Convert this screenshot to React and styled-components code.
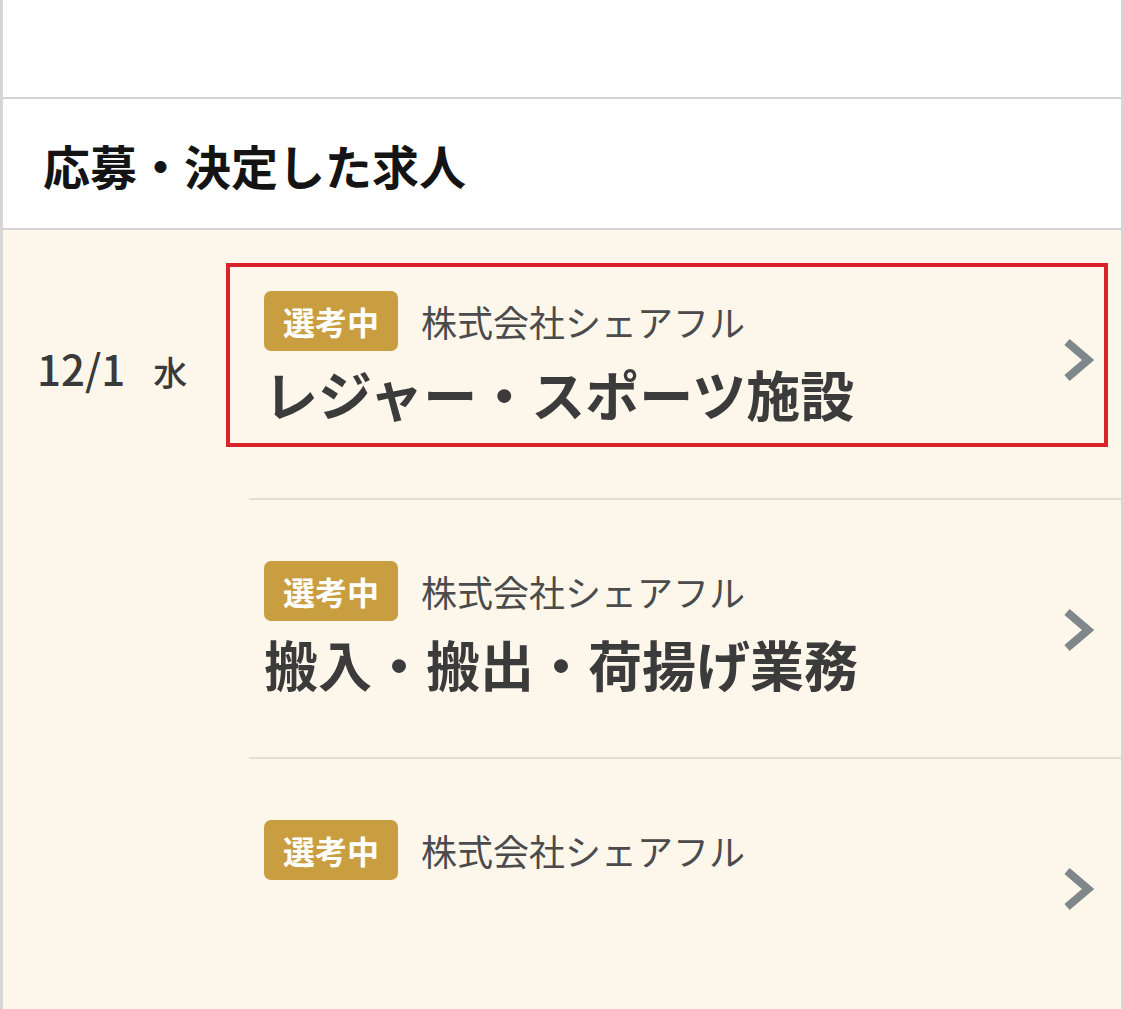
import React from "react";
import styled, { createGlobalStyle } from "styled-components";

const Global = createGlobalStyle`
  html, body { margin: 0; padding: 0; background: #ffffff; }
  body {
    font-family: "Noto Sans CJK JP", "Noto Sans", sans-serif;
    -webkit-font-smoothing: antialiased;
  }
  * { box-sizing: border-box; }
`;

const Page = styled.div`
  width: 1124px;
  min-height: 100vh;
  display: flex;
  flex-direction: column;
  background: #ffffff;
  border-left: 3px solid #d6d6d6;
  border-right: 3px solid #d6d6d6;
`;

const TopArea = styled.div`
  height: 99px;
  border-bottom: 2px solid #d4d4d4;
`;

const Header = styled.div`
  height: 131px;
  display: flex;
  align-items: center;
  padding-left: 40px;
  border-bottom: 2px solid #d4d4d4;
`;

const Heading = styled.h2`
  margin: 0;
  font-size: 47px;
  font-weight: 700;
  line-height: 1;
  color: #141414;
  padding-top: 2px;
`;

const List = styled.div`
  flex: 1;
  background: #fdf7eb;
`;

const Row = styled.div`
  position: relative;
  display: flex;
`;

const DateCol = styled.div`
  width: 246px;
  flex: none;
  padding-top: 117px;
  padding-left: 34px;
  color: #3a3a3a;
  font-size: 42px;
  font-weight: 500;
  line-height: 1;
  white-space: nowrap;
`;

const Weekday = styled.span`
  margin-left: 28px;
  font-size: 34px;
`;

const Body = styled.div`
  flex: 1;
  display: flex;
  align-items: center;
  padding: 61px 0 ${(p) => (p.$first ? "69px" : "58px")} 15px;
  border-top: ${(p) => (p.$divider ? "2px solid #e3ded3" : "none")};
`;

const Content = styled.div`
  flex: 1;
  display: flex;
  flex-direction: column;
  gap: 8px;
`;

const Meta = styled.div`
  display: flex;
  align-items: center;
  gap: 23px;
`;

const Badge = styled.span`
  display: inline-block;
  height: 60px;
  line-height: 60px;
  padding: 0 19px;
  border-radius: 7px;
  background: #c99e40;
  color: #ffffff;
  font-size: 32px;
  font-weight: 700;
`;

const Company = styled.span`
  font-size: 36px;
  font-weight: 400;
  color: #4b4b4b;
  line-height: 1;
`;

const Title = styled.div`
  font-size: 54px;
  font-weight: 700;
  color: #3b3b3b;
  line-height: 70px;
  white-space: nowrap;
`;

const Chevron = styled.svg`
  flex: none;
  width: 32px;
  height: 46px;
  margin-right: 27px;
`;

const Highlight = styled.div`
  position: absolute;
  left: 223px;
  right: 13px;
  top: 33px;
  height: 184px;
  border: 4px solid #d9232b;
  pointer-events: none;
`;

const items = [
  { date: "12/1", day: "水", title: "レジャー・スポーツ施設" },
  { title: "搬入・搬出・荷揚げ業務" },
  { title: "\u00A0" },
];

function Arrow() {
  return (
    <Chevron viewBox="0 0 32 46">
      <polyline
        points="5,5 26,23 5,41"
        fill="none"
        stroke="#80878a"
        strokeWidth="8"
        strokeLinejoin="miter"
        strokeLinecap="butt"
      />
    </Chevron>
  );
}

export default function App() {
  return (
    <>
      <Global />
      <Page>
        <TopArea />
        <Header>
          <Heading>応募・決定した求人</Heading>
        </Header>
        <List>
          {items.map((it, i) => (
            <Row key={i}>
              <DateCol>
                {it.date && (
                  <>
                    {it.date}
                    <Weekday>{it.day}</Weekday>
                  </>
                )}
              </DateCol>
              <Body $first={i === 0} $divider={i > 0}>
                <Content>
                  <Meta>
                    <Badge>選考中</Badge>
                    <Company>株式会社シェアフル</Company>
                  </Meta>
                  <Title>{it.title}</Title>
                </Content>
                <Arrow />
              </Body>
              {i === 0 && <Highlight />}
            </Row>
          ))}
        </List>
      </Page>
    </>
  );
}
